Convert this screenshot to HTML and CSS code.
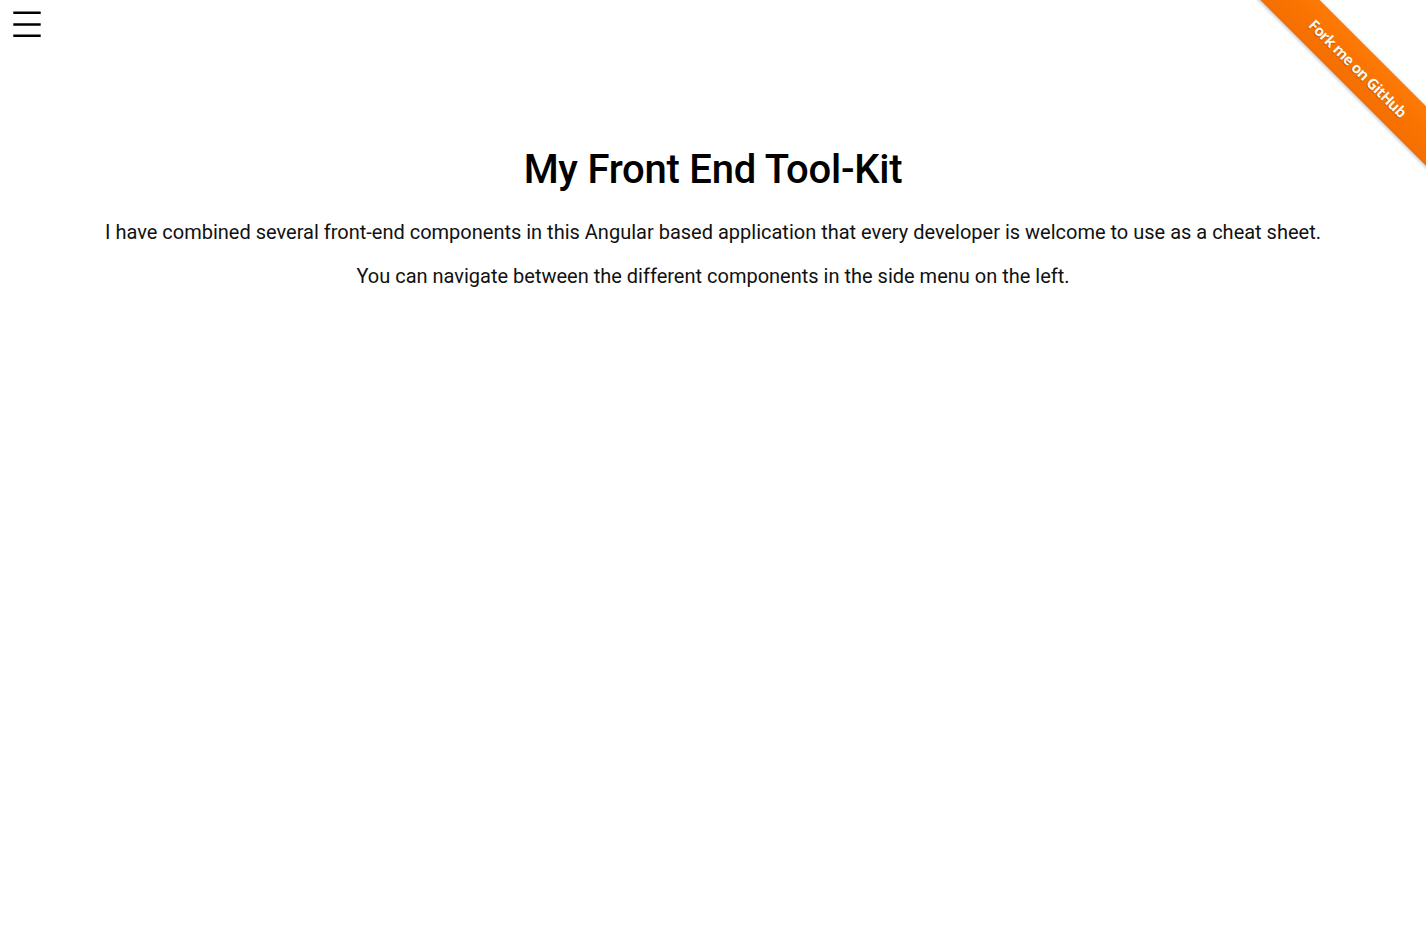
FILE: index.html
```html
<!DOCTYPE html>
<html lang="en">
<head>
<meta charset="utf-8">
<title>My Front End Tool-Kit</title>
<link rel="stylesheet" href="styles.css">
</head>
<body>
<header class="topbar">
  <button class="menu-btn" aria-label="Menu">
    <svg width="28" height="26" viewBox="0 0 28 26" aria-hidden="true">
      <path d="M0.3 1.8H27.7M0.3 13.5H27.7M0.3 24.8H27.7" stroke="#000" stroke-width="2.4" fill="none"/>
    </svg>
  </button>
</header>
<main class="content">
  <h1 class="title">My Front End Tool-Kit</h1>
  <p class="lead">I have combined several front-end components in this Angular based application that every developer is welcome to use as a cheat sheet.</p>
  <p class="lead">You can navigate between the different components in the side menu on the left.</p>
</main>
<a class="fork" href="#">
  <span class="fork-band">Fork me on GitHub</span>
</a>
</body>
</html>
```

FILE: styles.css
```css
html, body {
  margin: 0;
  padding: 0;
  background: #fff;
}

body {
  font-family: Roboto, "Liberation Sans", Arial, sans-serif;
  color: #000;
}

.topbar {
  display: flex;
  align-items: flex-start;
  height: 60px;
  padding: 11px 0 0 13px;
  box-sizing: border-box;
}

.menu-btn {
  display: block;
  width: 28px;
  height: 26px;
  padding: 0;
  margin: 0;
  border: 0;
  background: transparent;
  cursor: pointer;
}

.menu-btn svg {
  display: block;
}

.content {
  text-align: center;
  padding: 88px 20px 0;
}

.title {
  font-size: 40px;
  font-weight: 500;
  line-height: 44px;
  margin: 0 0 28px;
  letter-spacing: -0.25px;
}

.lead {
  font-size: 20px;
  line-height: 24px;
  margin: 0 0 20px;
  color: #111;
}

.fork {
  position: absolute;
  top: 0;
  right: 0;
  width: 170px;
  height: 170px;
  overflow: hidden;
  text-decoration: none;
}

.fork-band {
  position: absolute;
  left: -48px;
  top: 47px;
  width: 300px;
  height: 42px;
  transform: rotate(45deg);
  background: linear-gradient(#ff7a06, #f97300 50%, #f46f00);
  box-shadow: 0 1px 4px rgba(80, 90, 110, 0.45);
  display: flex;
  align-items: center;
  justify-content: center;
  font-family: "Open Sans", "DejaVu Sans", sans-serif;
  font-weight: 700;
  font-size: 15px;
  letter-spacing: -0.6px;
  color: #fff6ea;
  text-shadow: 0 1px 1px rgba(120, 50, 0, 0.5);
}
```
